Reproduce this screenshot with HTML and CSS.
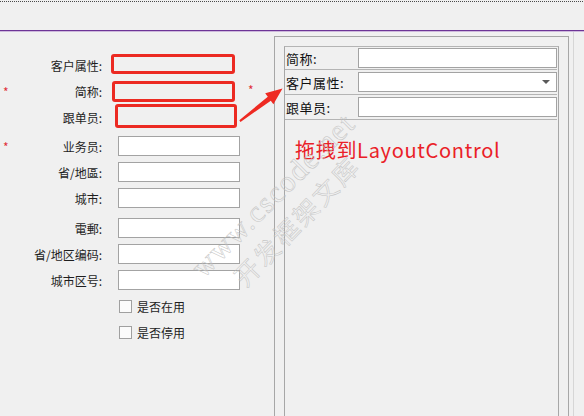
FILE: index.html
```html
<!DOCTYPE html>
<html lang="zh">
<head>
  <meta charset="UTF-8" />
  <title>客户信息</title>
  <link rel="stylesheet" href="styles.css">
</head>
<body>
  <div class="screen">
    <div class="titlebar"></div>
    <div class="divider"></div>

    <main class="content">
      <section class="customer-form">
        <div class="form-row">
          <span class="star"></span>
          <label>客户属性:</label>
          <div class="moved moved-1"></div>
        </div>
        <div class="form-row">
          <span class="star">*</span>
          <label>简称:</label>
          <div class="moved moved-2"></div>
          <span class="star star-out">*</span>
        </div>
        <div class="form-row">
          <span class="star"></span>
          <label>跟单员:</label>
          <div class="moved moved-3"></div>
        </div>
        <div class="form-row spaced">
          <span class="star">*</span>
          <label>业务员:</label>
          <input type="text" class="field" />
        </div>
        <div class="form-row">
          <span class="star"></span>
          <label>省/地區:</label>
          <input type="text" class="field" />
        </div>
        <div class="form-row">
          <span class="star"></span>
          <label>城市:</label>
          <input type="text" class="field" />
        </div>
        <div class="form-row spaced">
          <span class="star"></span>
          <label>電郵:</label>
          <input type="text" class="field" />
        </div>
        <div class="form-row">
          <span class="star"></span>
          <label>省/地区编码:</label>
          <input type="text" class="field" />
        </div>
        <div class="form-row">
          <span class="star"></span>
          <label>城市区号:</label>
          <input type="text" class="field" />
        </div>
        <div class="form-row">
          <span class="star"></span>
          <label></label>
          <span class="check"><span class="check-box"></span>是否在用</span>
        </div>
        <div class="form-row">
          <span class="star"></span>
          <label></label>
          <span class="check"><span class="check-box"></span>是否停用</span>
        </div>
      </section>

      <section class="layout-panel">
        <div class="layout-group">
          <div class="layout-item first">
            <span class="item-label">简称:</span>
            <input type="text" class="item-field" />
          </div>
          <div class="layout-item">
            <span class="item-label">客户属性:</span>
            <div class="item-field combo"><span class="combo-arrow"></span></div>
          </div>
          <div class="layout-item">
            <span class="item-label">跟单员:</span>
            <input type="text" class="item-field" />
          </div>
          <p class="drag-note">拖拽到LayoutControl</p>
        </div>
      </section>
      <div class="panel-edge"></div>
    </main>

    <!-- annotation arrow -->
    <svg class="drag-arrow" width="584" height="416" viewBox="0 0 584 416">
      <polygon fill="#ee2a22" points="240.5,122 270.8,100.7 273.4,104.2 282.5,88.6 265.2,93.3 267.8,96.7 239.3,120.2" />
    </svg>

    <!-- watermark -->
    <div class="watermark wm-site">www.cscode.net</div>
    <div class="watermark wm-name">开发框架文库</div>
  </div>
</body>
</html>
```

FILE: styles.css
```css
* {
  box-sizing: border-box;
  margin: 0;
  padding: 0;
}

body {
  background-color: #f0f0f0;
  font-family: 'Noto Sans CJK SC', 'Noto Sans', sans-serif;
  font-size: 12px;
  color: #1e1e1e;
}

.screen {
  position: relative;
  width: 584px;
  height: 416px;
  overflow: hidden;
}

.titlebar {
  margin-top: 1px;
  width: 583px;
  height: 29px;
  border-top: 1px dotted #4a4a4a;
}

.divider {
  height: 2px;
  border-top: 1px solid #6d3596;
  border-bottom: 1px solid #cdb8dc;
}

.content {
  display: flex;
  height: 384px;
}

/* Left form */
.customer-form {
  width: 274px;
  padding-top: 23px;
  display: flex;
  flex-direction: column;
  gap: 6px;
}

.form-row {
  display: flex;
  align-items: center;
  height: 20px;
}

.form-row.spaced {
  margin-top: 3px;
}

.form-row.spaced + .form-row + .form-row + .form-row.spaced {
  margin-top: 4px;
}

.star {
  width: 12px;
  padding-left: 3px;
  color: #e0303a;
  font-size: 12px;
  line-height: 12px;
  height: 12px;
  margin-top: 2px;
}

.form-row label {
  width: 90px;
  text-align: right;
  margin-right: 16px;
  white-space: nowrap;
}

.field {
  width: 122px;
  height: 20px;
  background: #ffffff;
  border: 1px solid #a3a3a3;
}

.moved {
  border: 3px solid #ec2a22;
  border-radius: 3px;
}

.moved-1 {
  margin-left: -7px;
  width: 124px;
  height: 20px;
  margin-top: -2px;
}

.moved-2 {
  margin-left: -6px;
  width: 123px;
  height: 21px;
}

.moved-3 {
  margin-left: -3px;
  width: 122px;
  height: 24px;
  margin-top: -2px;
}

.star-out {
  margin-left: 10px;
  margin-top: -2px;
}

.check {
  display: flex;
  align-items: center;
  gap: 5px;
  margin-left: 1px;
}

.check-box {
  width: 13px;
  height: 13px;
  background: #fbfbfb;
  border: 1px solid #a0a0a0;
}

/* Layout control panel */
.layout-panel {
  margin-top: 4px;
  width: 295px;
  border-top: 1px solid #a7a7a7;
  border-left: 1px solid #a7a7a7;
  border-right: 1px solid #a7a7a7;
  padding: 9px 9px 0 9px;
}

.layout-group {
  height: 100%;
  border-top: 1px solid #b4b4b4;
  border-left: 1px solid #a7a7a7;
  border-right: 1px solid #a7a7a7;
}

.layout-item {
  display: flex;
  align-items: center;
  height: 25px;
  border-bottom: 1px solid #b4b4b4;
  margin-right: 1px;
}

.layout-item.first {
  height: 23px;
}

.item-label {
  width: 73px;
  padding-left: 1px;
  font-size: 13px;
  color: #111;
  letter-spacing: 0.5px;
}

.item-field {
  width: 199px;
  height: 20px;
  background: #ffffff;
  border: 1px solid #a3a3a3;
}

.combo {
  display: flex;
  align-items: center;
  justify-content: flex-end;
  padding-right: 6px;
}

.combo-arrow {
  width: 0;
  height: 0;
  border-left: 4px solid transparent;
  border-right: 4px solid transparent;
  border-top: 4px solid #5a5a5a;
}

.drag-note {
  margin-top: 17px;
  padding-left: 10px;
  font-size: 20px;
  line-height: 26px;
  letter-spacing: 0.7px;
  color: #ea2027;
}

.panel-edge {
  width: 1px;
  margin-left: 4px;
  background: #d6d6d6;
}

/* overlays */
.drag-arrow {
  position: absolute;
  left: 0;
  top: 0;
  pointer-events: none;
}

.watermark {
  position: absolute;
  color: transparent;
  -webkit-text-stroke: 0.5px #c2c2c2;
  text-align: center;
  white-space: nowrap;
  pointer-events: none;
}

.wm-site {
  left: 153px;
  top: 178px;
  width: 240px;
  font-family: 'Liberation Serif', serif;
  font-size: 30px;
  line-height: 34px;
  letter-spacing: 1.5px;
  transform: rotate(-45deg);
}

.wm-name {
  left: 196px;
  top: 204px;
  width: 200px;
  font-family: 'Noto Sans CJK SC', sans-serif;
  font-size: 25px;
  line-height: 32px;
  letter-spacing: 3px;
  transform: rotate(-46deg);
}
```
